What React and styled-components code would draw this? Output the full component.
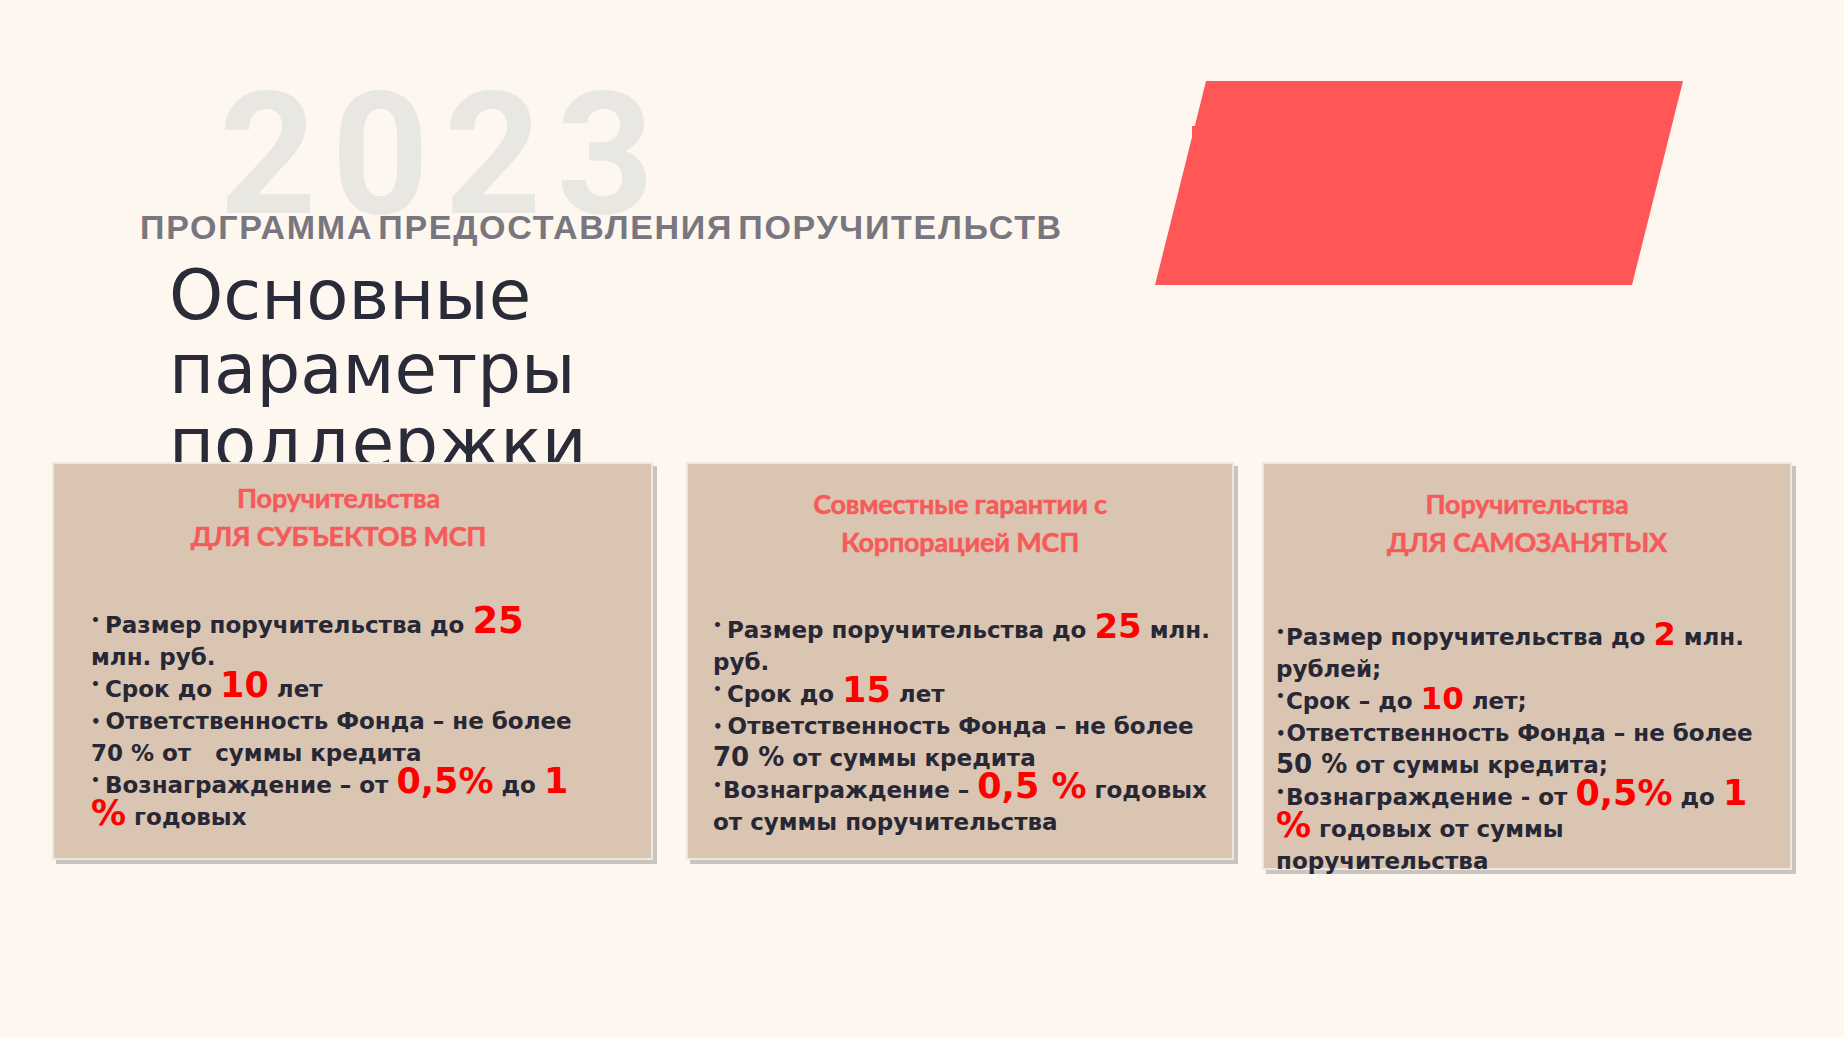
import React from 'react'
import styled, { createGlobalStyle } from 'styled-components'

const GlobalStyle = createGlobalStyle`
  html, body {
    margin: 0;
    padding: 0;
    background: #fdf7f0;
  }
`

const cards = [
  {
    key: 'msp',
    width: 601,
    height: 398,
    shift: 0,
    headTop: 15,
    headRight: 28,
    bodyTop: 54,
    bodyLeft: 37,
    bodyWidth: 488,
    title: ['Поручительства', 'ДЛЯ СУБЪЕКТОВ МСП'],
    items: [
      { bullet: 'raised', parts: ['Размер поручительства до ', { big: '25', size: 37 }, ' млн. руб.'] },
      { bullet: 'raised', parts: ['Срок до ', { big: '10', size: 35 }, ' лет'] },
      { bullet: 'normal', parts: ['Ответственность Фонда – не более 70 % от\u00a0\u00a0 суммы кредита'] },
      { bullet: 'raised', parts: ['Вознаграждение – от ', { big: '0,5%', size: 35 }, ' до ', { big: '1 %', size: 35 }, ' годовых'] }
    ]
  },
  {
    key: 'corp',
    width: 548,
    height: 398,
    shift: 33,
    headTop: 21,
    headRight: 0,
    bodyTop: 53,
    bodyLeft: 25,
    bodyWidth: 510,
    title: ['Совместные гарантии с', 'Корпорацией МСП'],
    items: [
      { bullet: 'raised', parts: ['Размер поручительства до ', { big: '25', size: 34 }, ' млн. руб.'] },
      { bullet: 'raised', parts: ['Срок до ', { big: '15', size: 35 }, ' лет'] },
      { bullet: 'normal', parts: ['Ответственность Фонда – не более ', { mid: '70 %' }, ' от суммы кредита'] },
      { bullet: 'raised', tight: true, parts: ['Вознаграждение – ', { big: '0,5 %', size: 35 }, ' годовых от суммы поручительства'] }
    ]
  },
  {
    key: 'self',
    width: 530,
    height: 408,
    shift: 28,
    headTop: 21,
    headRight: 0,
    bodyTop: 60,
    bodyLeft: 12,
    bodyWidth: 485,
    title: ['Поручительства', 'ДЛЯ САМОЗАНЯТЫХ'],
    items: [
      { bullet: 'raised', tight: true, parts: ['Размер поручительства до ', { big: '2', size: 32 }, ' млн. рублей;'] },
      { bullet: 'raised', tight: true, parts: ['Срок – до ', { big: '10', size: 31 }, ' лет;'] },
      { bullet: 'normal', tight: true, parts: ['Ответственность Фонда – не более ', { mid: '50 %' }, ' от суммы кредита;'] },
      { bullet: 'raised', tight: true, parts: ['Вознаграждение - от ', { big: '0,5%', size: 35 }, ' до ', { big: '1 %', size: 35 }, ' годовых от суммы поручительства'] }
    ]
  }
]

const Page = styled.div`
  width: 1844px;
  height: 1037px;
  overflow: hidden;
  background: #fdf7f0;
`

const Header = styled.header`
  display: flex;
  align-items: flex-start;
  box-sizing: border-box;
  height: 462px;
  padding: 81px 0 0 140px;
  overflow: hidden;
`

const Intro = styled.div`
  display: flex;
  flex-direction: column;
  width: 1015px;
  flex-shrink: 0;
`

const Year = styled.div`
  margin: 14px 0 0 79px;
  font-family: Roboto, 'Liberation Sans', sans-serif;
  font-weight: 700;
  font-size: 170px;
  line-height: 120px;
  letter-spacing: 15px;
  color: #e8e7e2;
`

const Program = styled.div`
  margin-top: -5px;
  font-family: 'Liberation Sans', Arial, sans-serif;
  font-weight: 700;
  font-size: 34px;
  line-height: 34px;
  letter-spacing: 1.7px;
  word-spacing: -6px;
  color: #78767e;
  white-space: nowrap;
`

const Title = styled.h1`
  margin: 14px 0 0 29px;
  max-width: 450px;
  font-family: 'DejaVu Sans', sans-serif;
  font-weight: 400;
  font-size: 69px;
  line-height: 74px;
  color: #2a2b38;
`

const Shape = styled.svg`
  display: block;
  flex-shrink: 0;
`

const CardRow = styled.section`
  display: flex;
  align-items: flex-start;
  padding-left: 52px;
`

const Card = styled.article`
  box-sizing: border-box;
  width: ${p => p.$w}px;
  height: ${p => p.$h}px;
  margin-left: ${p => p.$shift}px;
  background: #d9c5b1;
  border: 2px solid #ece7df;
  box-shadow: 4px 4px 0 #c9c4bd;
  display: flex;
  flex-direction: column;
`

const CardTitle = styled.h2`
  margin: 0;
  padding: ${p => p.$top}px ${p => p.$right}px 0 0;
  font-family: Lato, 'Open Sans', sans-serif;
  font-weight: 700;
  font-size: 27px;
  line-height: 38px;
  letter-spacing: -0.2px;
  text-align: center;
  color: #f65a5a;
  -webkit-text-stroke: 0.5px #f65a5a;
`

const Body = styled.div`
  margin-top: ${p => p.$top}px;
  padding-left: ${p => p.$left}px;
  max-width: ${p => p.$width}px;
  font-family: 'DejaVu Sans', sans-serif;
  font-weight: 700;
  font-size: 23px;
  line-height: 32px;
  color: #272735;
`

const Item = styled.p`
  margin: 0;
`

const Bullet = styled.span`
  font-size: ${p => (p.$raised ? 14 : 15)}px;
  vertical-align: ${p => (p.$raised ? '8px' : '2px')};
  line-height: 0;
  margin-right: ${p => (p.$tight ? 1 : 5)}px;
`

const Big = styled.span`
  font-size: ${p => p.$size}px;
  line-height: 0;
  color: #ff0000;
`

const Mid = styled.span`
  font-size: 26px;
  line-height: 0;
`

const renderPart = (part, i) => {
  if (typeof part === 'string') return <React.Fragment key={i}>{part}</React.Fragment>
  if (part.big) return <Big key={i} $size={part.size}>{part.big}</Big>
  return <Mid key={i}>{part.mid}</Mid>
}

export default function App() {
  return (
    <Page>
      <GlobalStyle />
      <Header>
        <Intro>
          <Year>2023</Year>
          <Program>ПРОГРАММА ПРЕДОСТАВЛЕНИЯ ПОРУЧИТЕЛЬСТВ</Program>
          <Title>Основные параметры поддержки</Title>
        </Intro>
        <Shape width="528" height="204" viewBox="0 0 528 204">
          <polygon points="51,0 528,0 477,204 0,204 37,56 37,45 39.8,45" fill="#ff5757" />
        </Shape>
      </Header>
      <CardRow>
        {cards.map(card => (
          <Card key={card.key} $w={card.width} $h={card.height} $shift={card.shift}>
            <CardTitle $top={card.headTop} $right={card.headRight}>
              {card.title[0]}
              <br />
              {card.title[1]}
            </CardTitle>
            <Body $top={card.bodyTop} $left={card.bodyLeft} $width={card.bodyWidth}>
              {card.items.map((item, i) => (
                <Item key={i}>
                  <Bullet $raised={item.bullet === 'raised'} $tight={item.tight}>•</Bullet>
                  {item.parts.map(renderPart)}
                </Item>
              ))}
            </Body>
          </Card>
        ))}
      </CardRow>
    </Page>
  )
}
